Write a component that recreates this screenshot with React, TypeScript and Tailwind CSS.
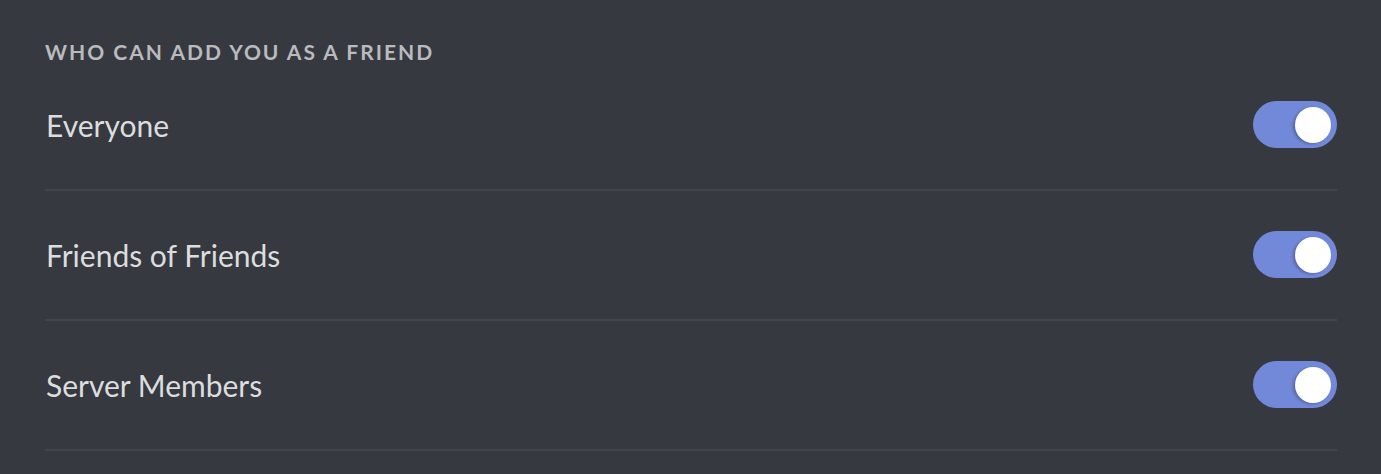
import React from "react";

function Toggle() {
  return (
    <div className="relative h-[47px] w-[84px] rounded-full bg-[#7289da] shrink-0">
      <div className="absolute right-[6px] top-[6px] h-[36px] w-[36px] rounded-full bg-white shadow-[-2px_1px_3px_rgba(0,0,0,0.25)]" />
    </div>
  );
}

const rows = ["Everyone", "Friends of Friends", "Server Members"];

export default function App() {
  return (
    <div
      className="h-[474px] w-[1381px] bg-[#36393f] pl-[45px] pr-[44px] overflow-hidden"
      style={{ fontFamily: "Lato, 'Open Sans', sans-serif" }}
    >
      <div className="pt-[41px] h-[61px]">
        <div className="text-[21px] leading-[22px] font-bold tracking-[2px] text-[#b9bbbe]">
          WHO CAN ADD YOU AS A FRIEND
        </div>
      </div>
      {rows.map((r) => (
        <div
          key={r}
          className="flex h-[130px] items-center justify-between border-b-2 border-[#42454a] pb-[2px]"
        >
          <span className="text-[30px] leading-[36px] text-[#dcddde] pl-[1px] pt-[2px]">{r}</span>
          <Toggle />
        </div>
      ))}
    </div>
  );
}
